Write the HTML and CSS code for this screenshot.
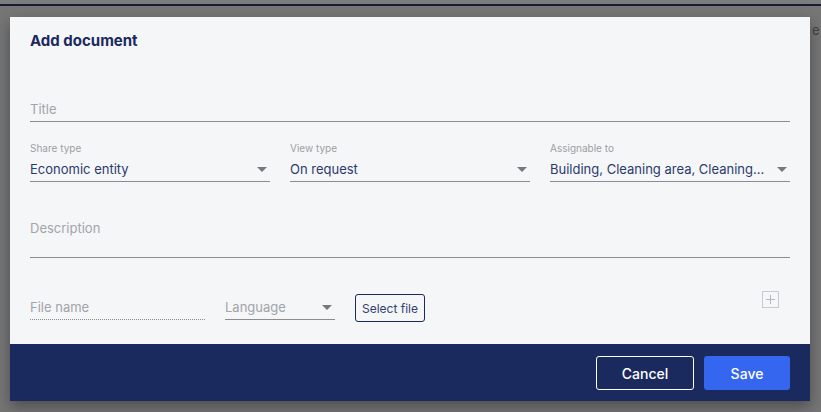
FILE: index.html
```html
<!DOCTYPE html>
<html lang="en">
<head>
  <meta charset="UTF-8">
  <title>Add document</title>
  <link rel="stylesheet" href="styles.css">
</head>
<body>
  <!-- Dimmed page behind the dialog -->
  <div class="topbar"></div>

  <div class="screen">
    <div class="modal">
      <div class="modal-body">
        <h2 class="modal-title">Add document</h2>

        <div class="field field-title">
          <div class="value placeholder">Title</div>
        </div>

        <div class="row">
          <div class="field select">
            <div class="label">Share type</div>
            <div class="value">Economic entity<span class="caret"></span></div>
          </div>
          <div class="field select">
            <div class="label">View type</div>
            <div class="value">On request<span class="caret"></span></div>
          </div>
          <div class="field select">
            <div class="label">Assignable to</div>
            <div class="value">Building, Cleaning area, Cleaning...<span class="caret"></span></div>
          </div>
        </div>

        <div class="field field-desc">
          <div class="value placeholder">Description</div>
        </div>

        <div class="file-row">
          <div class="field file-name">
            <div class="value placeholder">File name</div>
          </div>
          <div class="field select language">
            <div class="value placeholder">Language<span class="caret"></span></div>
          </div>
          <button class="btn-select">Select file</button>
          <div class="spacer"></div>
          <div class="add-icon">
            <svg width="17" height="17" viewBox="0 0 17 17">
              <rect x="0.5" y="0.5" width="16" height="16" fill="none" stroke="#c9cbd0"/>
              <path d="M8.5 4v9M4 8.5h9" stroke="#b5b7bc" stroke-width="1"/>
            </svg>
          </div>
        </div>
      </div>

      <div class="modal-footer">
        <button class="btn btn-cancel">Cancel</button>
        <button class="btn btn-save">Save</button>
      </div>
    </div>

    <div class="side-text">e</div>
  </div>
</body>
</html>
```

FILE: styles.css
```css
/* Basic Reset */
* {
  margin: 0;
  padding: 0;
  box-sizing: border-box;
}

body {
  background-color: #767676;
  font-family: Inter, "Noto Sans", Arial, sans-serif;
  width: 821px;
  height: 412px;
  overflow: hidden;
}

/* Page behind the overlay */
.topbar {
  height: 6px;
  background-color: #7d7d7d;
  border-bottom: 2px solid #161c36;
}

.screen {
  display: flex;
  align-items: flex-start;
  padding: 11px 0 0 10px;
}

.side-text {
  margin-left: 2px;
  padding-top: 5px;
  font-size: 13px;
  color: #3c3c3c;
  line-height: 16px;
}

/* Dialog */
.modal {
  width: 800px;
  flex-shrink: 0;
  background-color: #f5f6f8;
  box-shadow: 0 6px 14px rgba(0, 0, 0, 0.35);
}

.modal-body {
  height: 327px;
  padding: 14px 20px 0 20px;
}

.modal-title {
  font-size: 15px;
  font-weight: 700;
  line-height: 20px;
  color: #1b2a5e;
}

/* Fields */
.field {
  border-bottom: 1px solid #8c8c8c;
}

.label {
  font-size: 10px;
  line-height: 14px;
  color: #9d9fa3;
  margin-bottom: 2px;
}

.value {
  display: flex;
  align-items: center;
  height: 24px;
  font-size: 13px;
  color: #2b3a6d;
  white-space: nowrap;
}

.placeholder {
  color: #a2a4a8;
}

.caret {
  flex-shrink: 0;
  margin-left: auto;
  margin-right: 3px;
  width: 0;
  height: 0;
  border-left: 5px solid transparent;
  border-right: 5px solid transparent;
  border-top: 5px solid #76787c;
}

.field-title {
  margin-top: 46px;
}

.row {
  display: flex;
  gap: 20px;
  margin-top: 19px;
}

.row .field {
  flex: 1 1 0;
  min-width: 0;
}

.field-desc {
  margin-top: 34px;
  height: 42px;
}

/* File row */
.file-row {
  display: flex;
  align-items: flex-start;
  gap: 20px;
  margin-top: 33px;
}

.file-name {
  width: 175px;
  margin-top: 4px;
  border-bottom: 1px dotted #8c8c8c;
}

.language {
  width: 110px;
  margin-top: 4px;
}

.btn-select {
  margin-top: 3px;
  width: 70px;
  height: 28px;
  background: transparent;
  border: 1px solid #1b2a5e;
  border-radius: 3px;
  font-family: inherit;
  font-size: 12px;
  color: #33426f;
}

.spacer {
  flex: 1;
}

.add-icon {
  margin-right: 11px;
  height: 17px;
}

.add-icon svg {
  display: block;
}

/* Footer */
.modal-footer {
  height: 57px;
  background-color: #1b2a5e;
  display: flex;
  justify-content: flex-end;
  align-items: flex-start;
  gap: 10px;
  padding: 12px 20px 0 0;
}

.btn {
  height: 34px;
  border-radius: 3px;
  font-family: inherit;
  font-size: 14px;
  font-weight: 500;
  color: #ffffff;
}

.btn-cancel {
  width: 98px;
  background: transparent;
  border: 1px solid #ffffff;
}

.btn-save {
  width: 86px;
  background-color: #3566f0;
  border: none;
}
```
